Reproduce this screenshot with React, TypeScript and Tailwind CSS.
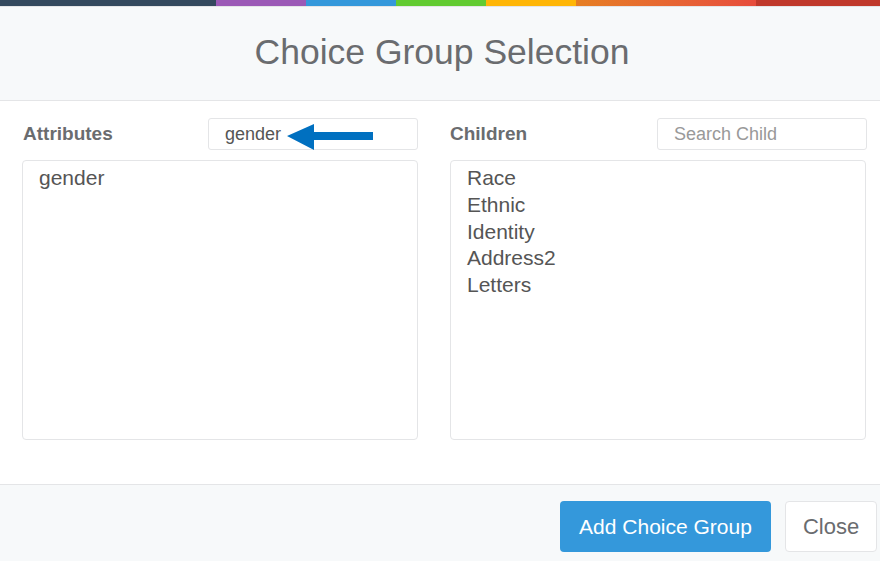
import React from 'react';

const children = ['Race', 'Ethnic', 'Identity', 'Address2', 'Letters'];

export default function App() {
  return (
    <div className="w-[880px] h-[561px] overflow-hidden bg-white text-[#6a6c6f] flex flex-col" style={{ fontFamily: '"Liberation Sans", Arial, sans-serif' }}>
      {/* color strip */}
      <div className="flex h-[6px] shrink-0">
        <div className="w-[216px] bg-[#34495e]" />
        <div className="w-[90px] bg-[#9b59b6]" />
        <div className="w-[90px] bg-[#3498db]" />
        <div className="w-[90px] bg-[#62cb31]" />
        <div className="w-[90px] bg-[#ffb606]" />
        <div className="w-[180px] bg-gradient-to-r from-[#e67e22] to-[#e74c3c]" />
        <div className="flex-1 bg-[#c0392b]" />
      </div>
      <div className="h-px bg-[#e4e5e7] shrink-0" />

      {/* header */}
      <div className="h-[94px] shrink-0 bg-[#f7f9fa] border-b border-[#e4e5e7] flex items-center justify-center">
        <h1 className="text-[35.5px] leading-none text-[#6a6c6f] pb-[2px] pl-[4px]">Choice Group Selection</h1>
      </div>

      {/* body */}
      <div className="flex-1 flex gap-[32px] pl-[22px] pt-[17px]">
        <div className="w-[396px] flex flex-col">
          <div className="flex items-center justify-between h-[32px]">
            <span className="text-[19px] font-bold pl-px">Attributes</span>
            <div className="relative w-[210px] h-[32px] border border-[#e4e5e7] rounded-[3px] flex items-center pl-[16px] text-[18px] text-[#555]">
              gender
              <svg className="absolute left-[78px] top-[3px]" width="88" height="28" viewBox="0 0 88 28">
                <polygon points="0,14 27,2 27,10 86,10 86,18 27,18 27,28" fill="#0070c0" />
              </svg>
            </div>
          </div>
          <div className="mt-[10px] h-[280px] border border-[#e4e5e7] rounded-[4px] pl-[16px] pt-[4px] text-[21px] leading-[26.75px] text-[#555]">
            <div>gender</div>
          </div>
        </div>

        <div className="w-[416px] flex flex-col">
          <div className="flex items-center justify-between h-[32px]">
            <span className="text-[19px] font-bold">Children</span>
            <input
              placeholder="Search Child"
              className="w-[210px] h-[32px] -mr-px border border-[#e4e5e7] rounded-[3px] pl-[16px] text-[18px] text-[#555] placeholder:text-[#999] outline-none"
            />
          </div>
          <div className="mt-[10px] h-[280px] border border-[#e4e5e7] rounded-[4px] pl-[16px] pt-[4px] text-[21px] leading-[26.75px] text-[#555]">
            {children.map((c) => (
              <div key={c}>{c}</div>
            ))}
          </div>
        </div>
      </div>

      {/* footer */}
      <div className="h-[77px] shrink-0 bg-[#f7f9fa] border-t border-[#e4e5e7] flex items-start justify-end gap-[14px] pt-[16px] pr-[3px]">
        <button className="w-[211px] h-[51px] rounded-[4px] bg-[#3498db] text-white text-[21px]">Add Choice Group</button>
        <button className="w-[92px] h-[51px] rounded-[4px] bg-white border border-[#e4e5e7] text-[#6a6c6f] text-[22px]">Close</button>
      </div>
    </div>
  );
}
